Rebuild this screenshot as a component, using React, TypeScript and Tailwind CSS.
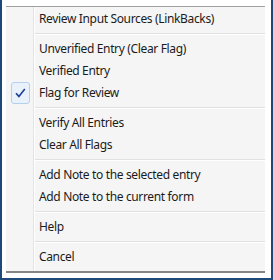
const groups: { label: string; checked?: boolean }[][] = [
  [{ label: "Review Input Sources (LinkBacks)" }],
  [
    { label: "Unverified Entry (Clear Flag)" },
    { label: "Verified Entry" },
    { label: "Flag for Review", checked: true },
  ],
  [{ label: "Verify All Entries" }, { label: "Clear All Flags" }],
  [
    { label: "Add Note to the selected entry" },
    { label: "Add Note to the current form" },
  ],
  [{ label: "Help" }],
  [{ label: "Cancel" }],
];

function CheckBox() {
  return (
    <div className="ml-[5px] flex h-[22px] w-[19px] items-center justify-center rounded-[3px] border border-[#b3d0ef] bg-[#e9f1fb]">
      <svg width="11" height="10" viewBox="0 0 11 10">
        <path
          d="M1 5.2 L3.9 8.4 L9.8 1"
          fill="none"
          stroke="#1c3f94"
          strokeWidth="1.6"
        />
      </svg>
    </div>
  );
}

function MenuItem({ label, checked }: { label: string; checked?: boolean }) {
  return (
    <div className="flex h-[22px] items-center">
      <div className="w-[29px] shrink-0">{checked && <CheckBox />}</div>
      <span className="pl-[4px] text-[12px] leading-[22px] tracking-[-0.35px] text-[#1b1b1b]">
        {label}
      </span>
    </div>
  );
}

function Separator() {
  return (
    <div className="flex h-[8px] items-center pl-[29px]">
      <div className="h-[2px] w-full border-t border-b border-t-[#e0e0e0] border-b-white" />
    </div>
  );
}

export default function App() {
  return (
    <div
      className="h-[280px] w-[273px] border-x-2 border-b-2 border-[#1e4877] bg-white pt-[6px] pl-[4px]"
      style={{ fontFamily: '"Noto Sans", "Liberation Sans", sans-serif' }}
    >
      <div className="h-[267px] w-[259px] border-t border-b-2 border-t-[#a0a0a0] border-b-[#858585] bg-[#f5f5f5] bg-[linear-gradient(to_right,transparent_27px,#e2e3e3_27px,#e2e3e3_28px,#ffffff_28px,#ffffff_29px,transparent_29px)] pt-[1px]">
        {groups.map((group, i) => (
          <div key={i}>
            {i > 0 && <Separator />}
            {group.map((item) => (
              <MenuItem key={item.label} {...item} />
            ))}
          </div>
        ))}
      </div>
    </div>
  );
}
